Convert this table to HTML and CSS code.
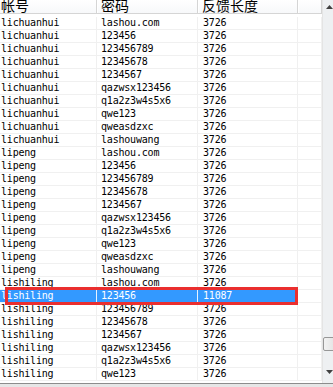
FILE: index.html
```html
<!DOCTYPE html>
<html>
<head>
<meta charset="utf-8">
<link rel="stylesheet" href="styles.css">
</head>
<body>
<div class="window">
  <div class="main">
    <div class="list">
      <div class="header">
        <div class="hcell c1"><span>帐号</span></div>
        <div class="hcell c2"><span>密码</span></div>
        <div class="hcell c3"><span>反馈长度</span></div>
        <div class="hcell c4"></div>
      </div>
      <div class="rows">
        <div class="row"><div class="cell c1">lichuanhui</div><div class="cell c2">lashou.com</div><div class="cell c3">3726</div><div class="cell c4"></div></div>
        <div class="row"><div class="cell c1">lichuanhui</div><div class="cell c2">123456</div><div class="cell c3">3726</div><div class="cell c4"></div></div>
        <div class="row"><div class="cell c1">lichuanhui</div><div class="cell c2">123456789</div><div class="cell c3">3726</div><div class="cell c4"></div></div>
        <div class="row"><div class="cell c1">lichuanhui</div><div class="cell c2">12345678</div><div class="cell c3">3726</div><div class="cell c4"></div></div>
        <div class="row"><div class="cell c1">lichuanhui</div><div class="cell c2">1234567</div><div class="cell c3">3726</div><div class="cell c4"></div></div>
        <div class="row"><div class="cell c1">lichuanhui</div><div class="cell c2">qazwsx123456</div><div class="cell c3">3726</div><div class="cell c4"></div></div>
        <div class="row"><div class="cell c1">lichuanhui</div><div class="cell c2">q1a2z3w4s5x6</div><div class="cell c3">3726</div><div class="cell c4"></div></div>
        <div class="row"><div class="cell c1">lichuanhui</div><div class="cell c2">qwe123</div><div class="cell c3">3726</div><div class="cell c4"></div></div>
        <div class="row"><div class="cell c1">lichuanhui</div><div class="cell c2">qweasdzxc</div><div class="cell c3">3726</div><div class="cell c4"></div></div>
        <div class="row"><div class="cell c1">lichuanhui</div><div class="cell c2">lashouwang</div><div class="cell c3">3726</div><div class="cell c4"></div></div>
        <div class="row"><div class="cell c1">lipeng</div><div class="cell c2">lashou.com</div><div class="cell c3">3726</div><div class="cell c4"></div></div>
        <div class="row"><div class="cell c1">lipeng</div><div class="cell c2">123456</div><div class="cell c3">3726</div><div class="cell c4"></div></div>
        <div class="row"><div class="cell c1">lipeng</div><div class="cell c2">123456789</div><div class="cell c3">3726</div><div class="cell c4"></div></div>
        <div class="row"><div class="cell c1">lipeng</div><div class="cell c2">12345678</div><div class="cell c3">3726</div><div class="cell c4"></div></div>
        <div class="row"><div class="cell c1">lipeng</div><div class="cell c2">1234567</div><div class="cell c3">3726</div><div class="cell c4"></div></div>
        <div class="row"><div class="cell c1">lipeng</div><div class="cell c2">qazwsx123456</div><div class="cell c3">3726</div><div class="cell c4"></div></div>
        <div class="row"><div class="cell c1">lipeng</div><div class="cell c2">q1a2z3w4s5x6</div><div class="cell c3">3726</div><div class="cell c4"></div></div>
        <div class="row"><div class="cell c1">lipeng</div><div class="cell c2">qwe123</div><div class="cell c3">3726</div><div class="cell c4"></div></div>
        <div class="row"><div class="cell c1">lipeng</div><div class="cell c2">qweasdzxc</div><div class="cell c3">3726</div><div class="cell c4"></div></div>
        <div class="row"><div class="cell c1">lipeng</div><div class="cell c2">lashouwang</div><div class="cell c3">3726</div><div class="cell c4"></div></div>
        <div class="row"><div class="cell c1">lishiling</div><div class="cell c2">lashou.com</div><div class="cell c3">3726</div><div class="cell c4"></div></div>
        <div class="row selected"><div class="cell c1">lishiling</div><div class="cell c2">123456</div><div class="cell c3">11087</div><div class="cell c4"></div></div>
        <div class="row"><div class="cell c1">lishiling</div><div class="cell c2">123456789</div><div class="cell c3">3726</div><div class="cell c4"></div></div>
        <div class="row"><div class="cell c1">lishiling</div><div class="cell c2">12345678</div><div class="cell c3">3726</div><div class="cell c4"></div></div>
        <div class="row"><div class="cell c1">lishiling</div><div class="cell c2">1234567</div><div class="cell c3">3726</div><div class="cell c4"></div></div>
        <div class="row"><div class="cell c1">lishiling</div><div class="cell c2">qazwsx123456</div><div class="cell c3">3726</div><div class="cell c4"></div></div>
        <div class="row"><div class="cell c1">lishiling</div><div class="cell c2">q1a2z3w4s5x6</div><div class="cell c3">3726</div><div class="cell c4"></div></div>
        <div class="row"><div class="cell c1">lishiling</div><div class="cell c2">qwe123</div><div class="cell c3">3726</div><div class="cell c4"></div></div>
      </div>
    </div>
    <div class="scrollbar">
      <svg class="arrow" width="7" height="4" viewBox="0 0 7 4"><polygon points="0,4 7,4 3.5,0" fill="#404040"/></svg>
      <div class="track">
        <div class="thumb"></div>
      </div>
      <svg class="arrow" width="7" height="4" viewBox="0 0 7 4"><polygon points="0,0 7,0 3.5,4" fill="#404040"/></svg>
    </div>
  </div>
  <div class="footer"></div>
  <div class="highlight"></div>
</div>
</body>
</html>
```

FILE: styles.css
```css
html, body {
  margin: 0;
  padding: 0;
  background: #ffffff;
}

.window {
  position: relative;
  width: 333px;
  height: 387px;
  overflow: hidden;
  display: flex;
  flex-direction: column;
  background: #ffffff;
}

.main {
  display: flex;
  height: 383px;
}

.list {
  width: 322px;
  display: flex;
  flex-direction: column;
  overflow: hidden;
}

.header {
  display: grid;
  grid-template-columns: 97px 101px 100px 24px;
  height: 14px;
  margin-bottom: 3px;
  border-bottom: 1px solid #d5d5d5;
  box-sizing: border-box;
  background: linear-gradient(#ffffff, #f7f8fa);
}

.hcell {
  border-right: 1px solid #d5d5d5;
  box-shadow: 1px 0 0 #ffffff;
  overflow: hidden;
  font-family: "Noto Sans CJK SC", "Noto Sans", sans-serif;
  font-size: 14px;
  line-height: 14px;
  color: #000000;
  white-space: nowrap;
}

.hcell span {
  display: block;
  margin-top: -2px;
}

.hcell.c1 { padding-left: 1px; }
.hcell.c2 { padding-left: 4px; }
.hcell.c3 { padding-left: 4px; }

.rows {
  display: flex;
  flex-direction: column;
}

.row {
  display: grid;
  grid-template-columns: 97px 101px 100px 24px;
  height: 13px;
}

.cell {
  border-right: 1px solid #f0f0f0;
  border-bottom: 1px solid #f0f0f0;
  font-family: "DejaVu Sans Mono", "Liberation Mono", monospace;
  font-size: 10px;
  letter-spacing: -0.2px;
  line-height: 12px;
  color: #000000;
  white-space: nowrap;
  overflow: hidden;
}

.cell.c1 { padding-left: 1px; }
.cell.c2 { padding-left: 4px; }
.cell.c3 { padding-left: 5px; }

.row.selected .c1,
.row.selected .c2,
.row.selected .c3 {
  background: #3399ff;
  color: #ffffff;
  border-right-color: #e6f2ff;
}

.scrollbar {
  width: 11px;
  background: #eef0f2;
  border-left: 1px solid #e4e4e4;
  box-sizing: border-box;
  display: flex;
  flex-direction: column;
  align-items: flex-end;
}

.arrow {
  margin: 5px 0 0 0;
  flex: none;
}

.scrollbar .arrow:last-child {
  margin: 0 0 9px 0;
}

.track {
  flex: 1;
  width: 100%;
  position: relative;
}

.thumb {
  position: absolute;
  left: 0;
  right: -4px;
  bottom: 19px;
  height: 14px;
  border: 1px solid #979797;
  border-radius: 2px;
  background: linear-gradient(90deg, #f2f2f2, #e2e2e2);
  box-sizing: border-box;
}

.footer {
  height: 4px;
  border-top: 1px solid #8c8c8c;
  background: #e6e6e6;
  box-sizing: border-box;
}

.highlight {
  position: absolute;
  left: 5px;
  top: 287px;
  width: 293px;
  height: 18px;
  border: 3px solid #ea2f2f;
  box-sizing: border-box;
}
```
